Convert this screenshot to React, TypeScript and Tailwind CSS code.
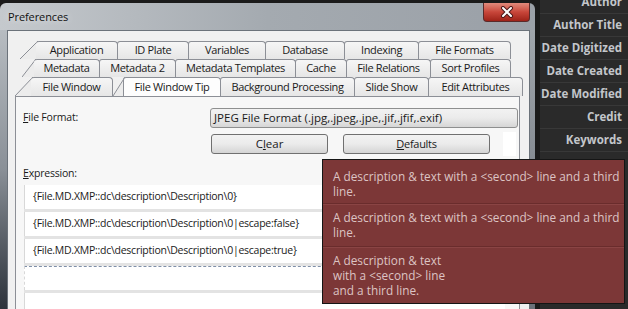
import React from 'react';

const ui = "font-['Open_Sans',sans-serif]";

type TabDef = { label: string; w: string; first?: boolean; active?: boolean };

const row1: TabDef[] = [
  { label: 'Application', w: 'w-[82px]', first: true },
  { label: 'ID Plate', w: 'w-[72px]' },
  { label: 'Variables', w: 'w-[78px]' },
  { label: 'Database', w: 'w-[80px]' },
  { label: 'Indexing', w: 'w-[75px]' },
  { label: 'File Formats', w: 'w-[93px]' },
];

const row2: TabDef[] = [
  { label: 'Metadata', w: 'w-[66px]', first: true },
  { label: 'Metadata 2', w: 'w-[77px]' },
  { label: 'Metadata Templates', w: 'w-[121px]' },
  { label: 'Cache', w: 'w-[52px]' },
  { label: 'File Relations', w: 'w-[85px]' },
  { label: 'Sort Profiles', w: 'w-[81px]' },
];

const row3: TabDef[] = [
  { label: 'File Window', w: 'w-[82px]', first: true },
  { label: 'File Window Tip', w: 'w-[98px]', active: true },
  { label: 'Background Processing', w: 'w-[135px]' },
  { label: 'Slide Show', w: 'w-[75px]' },
  { label: 'Edit Attributes', w: 'w-[95px]' },
];

const sideItems = ['Author', 'Author Title', 'Date Digitized', 'Date Created', 'Date Modified', 'Credit', 'Keywords'];

function Slant({ w, h }: { w: number; h: number }) {
  return (
    <svg width={w} height={h} className="shrink-0 -mr-px">
      <polygon points={`0,${h} ${w},0 ${w},${h}`} fill="#ececec" />
      <line x1="0" y1={h} x2={w} y2="0" stroke="#8c8f96" strokeWidth="1" />
    </svg>
  );
}

function Tab({ t }: { t: TabDef }) {
  return (
    <div
      className={`${t.w} h-full shrink-0 -ml-px first:ml-0 flex items-center justify-center border-t border-r border-[#8c8f96] rounded-tr-[4px] rounded-tl-[3px] text-[11px] tracking-[-0.35px] text-[#1a1a1a] whitespace-nowrap ${
        t.first ? '' : 'border-l'
      } ${t.active ? 'bg-[#fdfdfd] relative z-10' : 'bg-gradient-to-b from-[#f6f6f6] to-[#e6e6e6]'}`}
    >
      {t.label}
    </div>
  );
}

function TabRow({ tabs, pl, slantW, h }: { tabs: TabDef[]; pl: string; slantW: number; h: string }) {
  return (
    <div className={`flex items-end shrink-0 ${pl} ${h}`}>
      <Slant w={slantW} h={h === 'h-[19px]' ? 19 : 18} />
      {tabs.map((t) => (
        <React.Fragment key={t.label}>
          {t.active && <Slant w={12} h={19} />}
          <Tab t={t} />
        </React.Fragment>
      ))}
    </div>
  );
}

const expressions = [
  '{File.MD.XMP::dc\\description\\Description\\0}',
  '{File.MD.XMP::dc\\description\\Description\\0|escape:false}',
  '{File.MD.XMP::dc\\description\\Description\\0|escape:true}',
];

export default function App() {
  return (
    <div className={`${ui} relative w-[628px] h-[309px] overflow-hidden bg-[#1b1b1b] flex`}>
      {/* Preferences window */}
      <div className="w-[535px] shrink-0 mt-[3px] flex flex-col rounded-t-[6px] bg-gradient-to-r from-[#c5c9cd] via-[#a4aab0] to-[#9aa0a7]">
        {/* title bar */}
        <div className="h-[27px] shrink-0 flex items-start justify-between">
          <div className="pl-[8px] pt-[6px] text-[11px] tracking-[-0.1px] text-[#111] [text-shadow:0_0_6px_#e8eaec]">Preferences</div>
          <div className="mr-[5px] w-[47px] h-[19px] rounded-b-[4px] border border-t-0 border-[#5a2a2a] bg-gradient-to-b from-[#e08a7c] via-[#c8463a] to-[#9e2218] flex items-center justify-center">
            <svg width="14" height="12" viewBox="0 0 14 12">
              <path d="M3 2 L11 10 M11 2 L3 10" stroke="#4a1a1a" strokeWidth="4" strokeLinecap="round" />
              <path d="M3 2 L11 10 M11 2 L3 10" stroke="#ffffff" strokeWidth="2" strokeLinecap="round" />
            </svg>
          </div>
        </div>
        {/* frame + client */}
        <div className="flex-1 min-h-0 flex overflow-hidden">
          <div className="w-[7px] bg-gradient-to-b from-[#b7bcc1] via-[#8a9097] to-[#2d333b]" />
          <div className="w-[523px] border-l border-t border-r border-[#6b727a] bg-[#f0f0f0] flex flex-col min-h-0">
            <div className="pt-[10px] shrink-0 flex flex-col">
              <TabRow tabs={row1} pl="pl-[12px]" slantW={18} h="h-[18px]" />
              <TabRow tabs={row2} pl="pl-[14px]" slantW={14} h="h-[18px]" />
              <TabRow tabs={row3} pl="pl-[7px]" slantW={18} h="h-[19px]" />
            </div>
            {/* tab panel */}
            <div className="ml-[7px] w-[505px] flex-1 min-h-0 overflow-hidden border-t border-l border-r border-[#8c8f96] bg-[#f7f7f7] flex flex-col">
              <div className="mt-[11px] shrink-0 flex items-center h-[20px]">
                <div className="pl-[7px] w-[194px] text-[10.5px] tracking-[-0.2px] text-[#1a1a1a]">
                  <span className="underline">F</span>ile Format:
                </div>
                <div className="w-[308px] h-[20px] border border-[#8e8f8f] rounded-[3px] bg-gradient-to-b from-[#f2f2f2] via-[#ebebeb] to-[#d6d6d6] flex items-center pl-[3px] text-[11.5px] text-[#1a1a1a] whitespace-nowrap">
                  JPEG File Format (.jpg,.jpeg,.jpe,.jif,.jfif,.exif)
                </div>
              </div>
              <div className="mt-[6px] shrink-0 flex items-start">
                <div className="ml-[195px] w-[117px] h-[20px] border border-[#707070] rounded-[3px] bg-gradient-to-b from-[#f2f2f2] via-[#ebebeb] to-[#d4d4d4] flex items-center justify-center text-[11.5px] text-[#1a1a1a]">
                  C<span className="underline">l</span>ear
                </div>
                <div className="ml-[15px] w-[147px] h-[20px] border border-[#707070] rounded-[3px] bg-gradient-to-b from-[#f2f2f2] via-[#ebebeb] to-[#d4d4d4] flex items-center justify-center text-[11px] tracking-[-0.3px] text-[#1a1a1a]">
                  <span className="underline">D</span>efaults
                </div>
                <div className="ml-[13px] -mt-[2px] w-[13px] h-[24px] bg-white" />
              </div>
              <div className="mt-[11px] shrink-0 pl-[7px] h-[14px] flex items-center text-[10.5px] tracking-[-0.2px] text-[#1a1a1a]">
                <span className="underline">E</span>xpression:
              </div>
              <div className="mt-[4px] shrink-0 ml-[8px] w-[481px] flex flex-col gap-[3px] bg-[#e3e3e3]">
                {expressions.map((e) => (
                  <div key={e} className="h-[24px] shrink-0 bg-white border-l border-[#d8d8d8] flex items-center pl-[8px] text-[10.5px] tracking-[-0.25px] text-[#1a1a1a] whitespace-nowrap">
                    {e}
                  </div>
                ))}
                <div className="h-[24px] shrink-0 bg-white border-t border-dashed border-[#7f8fa8] border-l-[#d8d8d8] border-l" />
                <div className="h-[30px] shrink-0 bg-white border-l border-[#d8d8d8]" />
              </div>
            </div>
          </div>
          <div className="w-[5px] bg-gradient-to-b from-[#a0a6ac] to-[#6a7078]" />
        </div>
      </div>

      {/* right sidebar */}
      <div className="flex-1 ml-[5px] flex flex-col -mt-[9px] bg-[#2a2a2a]">
        {sideItems.map((s) => (
          <div key={s} className="h-[23px] shrink-0 border-b border-[#383838] flex items-center justify-end pr-[6px] text-[11.5px] font-bold text-[#c3c6ca] whitespace-nowrap">
            {s}
          </div>
        ))}
      </div>

      {/* tooltip */}
      <div className="absolute left-[322px] top-[159px] w-[303px] border border-[#151515] bg-[#7c3737] text-[11.8px] leading-[15px] text-[#dcc4c4] whitespace-nowrap">
        <div className="pl-[10px] pt-[9px] pb-[4px] border-b border-[#6a2c2c]">
          A description &amp; text with a &lt;second&gt; line and a third
          <br />
          line.
        </div>
        <div className="pl-[10px] pt-[5px] pb-[6px] border-t border-[#8a4444] border-b border-b-[#6a2c2c]">
          A description &amp; text with a &lt;second&gt; line and a third
          <br />
          line.
        </div>
        <div className="pl-[10px] pt-[5px] pb-[5px] border-t border-[#8a4444]">
          A description &amp; text
          <br />
          with a &lt;second&gt; line
          <br />
          and a third line.
        </div>
      </div>
    </div>
  );
}
